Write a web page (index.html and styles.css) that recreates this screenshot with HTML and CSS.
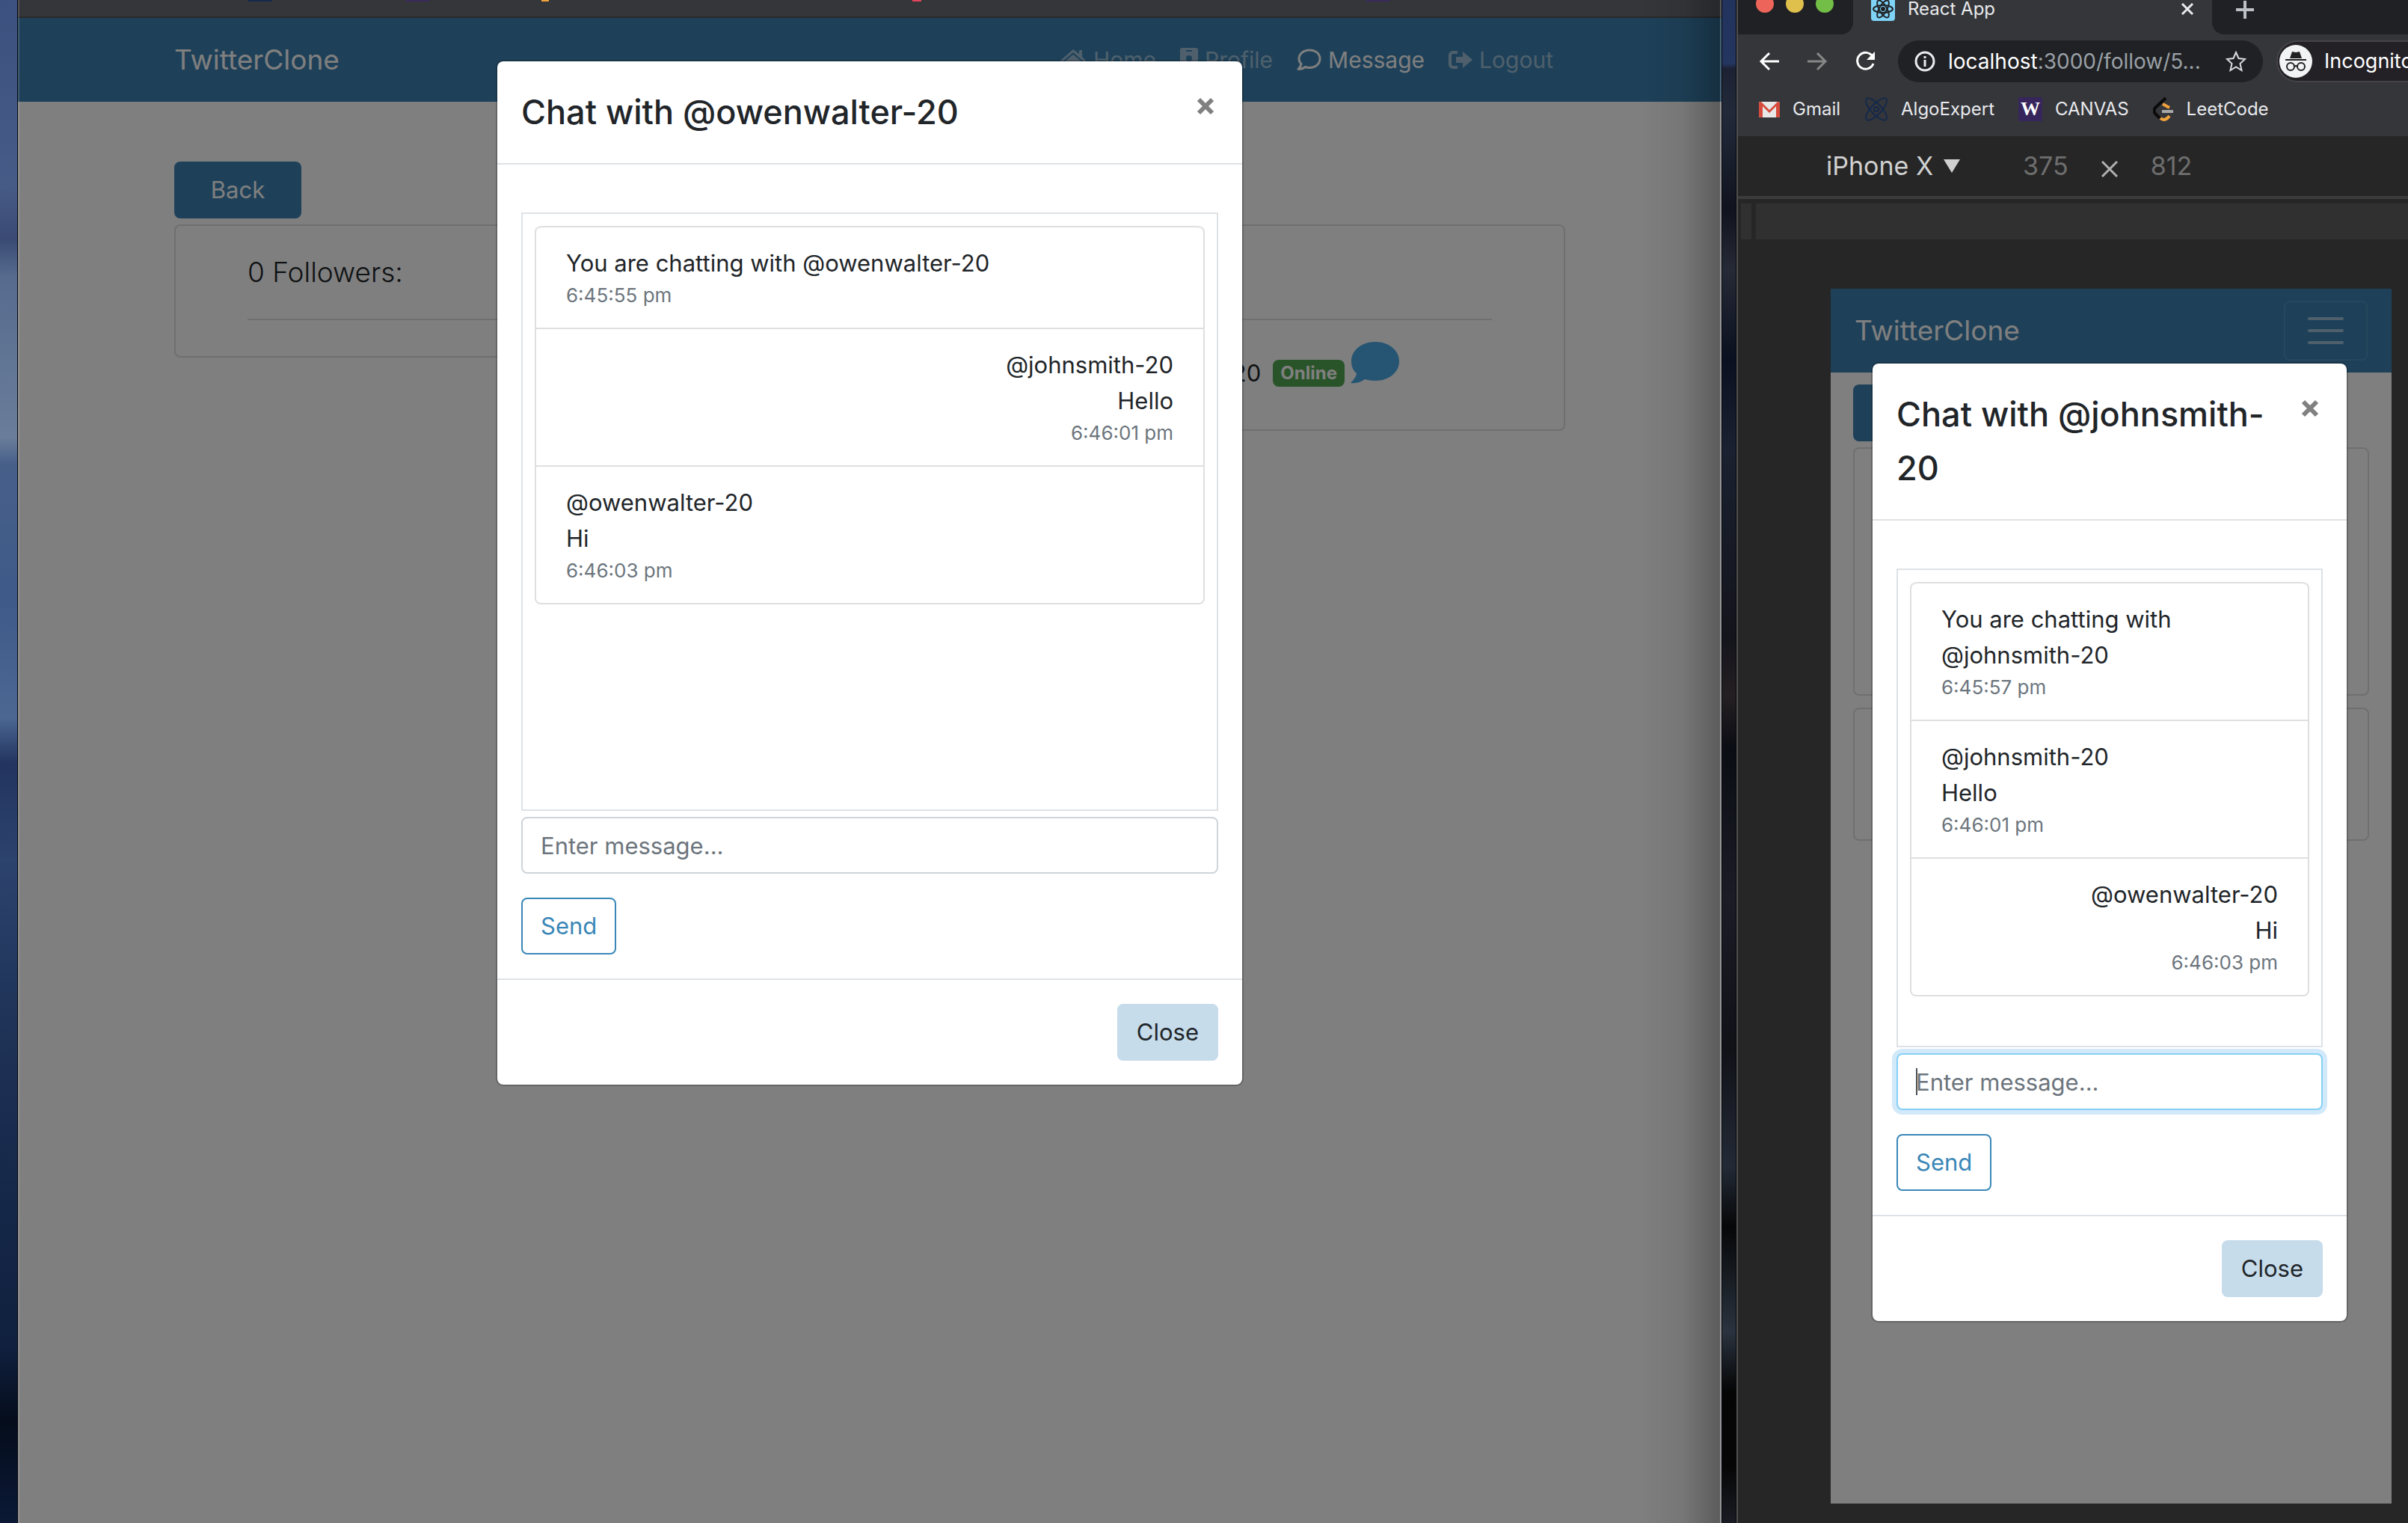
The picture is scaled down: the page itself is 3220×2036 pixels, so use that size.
FILE: index.html
```html
<!DOCTYPE html>
<html lang="en">
<head>
<meta charset="utf-8">
<title>TwitterClone</title>
<link rel="stylesheet" href="styles.css">
</head>
<body>
<div class="desktop">

  <section class="window window-main" aria-label="TwitterClone desktop">
    <div class="tab-edge">
      <span class="peek peek-navy"></span>
      <span class="peek peek-purple"></span>
      <span class="peek peek-orange"></span>
      <span class="peek peek-red"></span>
      <span class="peek peek-purple"></span>
    </div>
    <div class="page">
      <nav class="navbar">
        <div class="container navbar-row">
          <a class="brand" href="#">TwitterClone</a>
          <div class="nav-links">
            <a class="nav-link" href="#"><svg class="nav-icon" width="36" height="32" viewBox="0 0 36 32"><path d="M18 2 1 17l2 2L18 6l15 13 2-2-5-5V3h-4v5z"/><path d="M18 9 6 19v11h9v-8h6v8h9V19z"/></svg>Home</a>
            <a class="nav-link" href="#"><svg class="nav-icon" width="24" height="32" viewBox="0 0 24 32"><path fill-rule="evenodd" d="M3 0h18a3 3 0 0 1 3 3v26a3 3 0 0 1-3 3H3a3 3 0 0 1-3-3V3a3 3 0 0 1 3-3zm5 3v2h8V3zm4 7a4 4 0 1 0 0 8 4 4 0 0 0 0-8zM5 26h14c0-4-2-6-4-6H9c-2 0-4 2-4 6z"/></svg>Profile</a>
            <a class="nav-link active" href="#"><svg class="nav-icon" width="33" height="32" viewBox="0 0 33 32"><path fill="none" stroke="currentColor" stroke-width="3" stroke-linejoin="round" d="M17 3C9 3 3 8 3 14.500c0 3 1 5 3 7-.5 3-2 5-4 7 4 0 7-1 9.500-3 2 .7 3.500 1 5.500 1 8 0 14-5 14-12S25 3 17 3z"/></svg>Message</a>
            <a class="nav-link" href="#"><svg class="nav-icon" width="32" height="32" viewBox="0 0 32 32"><path d="M12 4H6a6 6 0 0 0-6 6v12a6 6 0 0 0 6 6h6v-4H6a2 2 0 0 1-2-2V10a2 2 0 0 1 2-2h6z"/><path d="M19 5v7h-9v8h9v7l13-11z"/></svg>Logout</a>
          </div>
        </div>
      </nav>
      <main class="container content">
        <button class="btn btn-back" type="button">Back</button>
        <div class="card-row">
          <div class="card">
            <h2 class="card-title">0 Followers:</h2>
            <hr class="rule">
          </div>
          <div class="card">
            <div class="card-title"></div>
            <hr class="rule">
            <div class="follow-row">
              <span>@owenwalter-20</span>
              <span class="badge">Online</span>
              <svg class="bubble" width="65" height="56" viewBox="0 0 65 56"><path d="M33 0C15 0 1 11 1 26c0 6 2 12 7 16 0 4-4 9-8 13 9 1 15-2 19-5 4 1 9 2 14 2 18 0 32-11 32-26S51 0 33 0z"/></svg>
            </div>
          </div>
        </div>
      </main>
      <div class="backdrop">
        <div class="modal" role="dialog" aria-labelledby="title-a">
          <header class="modal-header">
            <h1 class="modal-title" id="title-a">Chat with @owenwalter-20</h1>
            <button class="modal-x" type="button" aria-label="Dismiss"><svg width="24" height="24" viewBox="0 0 24 24"><path d="M3 3 21 21M21 3 3 21"/></svg></button>
          </header>
          <form class="modal-body">
            <div class="chat-box chat-box-tall">
              <ul class="messages">
                <li>You are chatting with @owenwalter-20<small>6:45:55 pm</small></li>
                <li class="mine">@johnsmith-20<br>Hello<small>6:46:01 pm</small></li>
                <li>@owenwalter-20<br>Hi<small>6:46:03 pm</small></li>
              </ul>
            </div>
            <input class="field" type="text" placeholder="Enter message..." aria-label="Message">
            <button class="btn btn-send" type="button">Send</button>
          </form>
          <footer class="modal-footer"><button class="btn btn-close" type="button">Close</button></footer>
        </div>
      </div>
    </div>
  </section>

  <section class="window window-phone" aria-label="React App">
    <div class="tabs">
      <div class="lights"><i class="light red"></i><i class="light yellow"></i><i class="light green"></i></div>
      <div class="tab">
        <svg width="32" height="32" viewBox="0 0 32 32"><rect width="32" height="32" rx="4" fill="#7fd3f7"/><g fill="none" stroke="#202124" stroke-width="2"><ellipse cx="16" cy="16" rx="13" ry="5"/><ellipse cx="16" cy="16" rx="13" ry="5" transform="rotate(60 16 16)"/><ellipse cx="16" cy="16" rx="13" ry="5" transform="rotate(120 16 16)"/></g><circle cx="16" cy="16" r="3" fill="#202124"/></svg>
        <span class="tab-title">React App</span>
        <svg width="18" height="18" viewBox="0 0 18 18"><path d="M2 2 16 16M16 2 2 16" stroke="#e8eaed" stroke-width="3"/></svg>
      </div>
      <div class="new-tab"><svg width="26" height="26" viewBox="0 0 26 26"><path d="M13 1v24M1 13h24" stroke="#bdc1c6" stroke-width="4"/></svg></div>
    </div>
    <div class="toolbar">
      <svg width="28" height="28" viewBox="0 0 28 28"><path d="M27 14H3M14 3 3 14l11 11" fill="none" stroke="#fff" stroke-width="3"/></svg>
      <svg width="28" height="28" viewBox="0 0 28 28"><path d="M1 14h24M14 3l11 11-11 11" fill="none" stroke="#868686" stroke-width="3"/></svg>
      <svg width="28" height="28" viewBox="0 0 28 28"><path d="M24 7.500A11 11 0 1 0 25 17" fill="none" stroke="#fff" stroke-width="3"/><path d="M27 1v11H16z" fill="#fff"/></svg>
      <div class="url">
        <svg width="28" height="28" viewBox="0 0 28 28"><circle cx="14" cy="14" r="12" fill="none" stroke="#e8eaed" stroke-width="3"/><path d="M14 12v9M14 7v3" stroke="#e8eaed" stroke-width="3"/></svg>
        <span class="address"><b>localhost</b>:3000/follow/5...</span>
        <svg width="28" height="28" viewBox="0 0 28 28"><path d="m14 2 3.500 8 8.500 1-6.500 6 2 9-7.500-4.500L6.500 26l2-9L2 11l8.500-1z" fill="none" stroke="#dadce0" stroke-width="2"/></svg>
      </div>
      <div class="incognito">
        <svg width="44" height="44" viewBox="0 0 44 44"><circle cx="22" cy="22" r="22" fill="#f1f3f4"/><path d="M14 18 17 9l5 1 5-1 3 9zM8 19h28v2H8z" fill="#202124"/><g fill="none" stroke="#202124" stroke-width="2"><circle cx="15" cy="29" r="5"/><circle cx="29" cy="29" r="5"/><path d="M20 29q2-2 4 0"/></g></svg>
        <span>Incognito</span>
      </div>
    </div>
    <div class="bookmarks">
      <a href="#"><svg width="28" height="32" viewBox="0 0 28 32"><rect y="6" width="28" height="21" rx="2" fill="#e8e8e8"/><path d="M14 17 25 6h1a2 2 0 0 1 2 2v17a2 2 0 0 1-2 2h-3V12l-9 9-9-9v15H2a2 2 0 0 1-2-2V8a2 2 0 0 1 2-2h1z" fill="#d54b3d"/></svg>Gmail</a>
      <a href="#"><svg width="32" height="32" viewBox="0 0 32 32"><g fill="none" stroke="#14294b" stroke-width="2"><ellipse cx="16" cy="16" rx="19" ry="7" transform="rotate(47 16 16)"/><ellipse cx="16" cy="16" rx="19" ry="7" transform="rotate(133 16 16)"/><circle cx="16" cy="16" r="3"/></g></svg>AlgoExpert</a>
      <a href="#"><span class="w-mark">W</span>CANVAS</a>
      <a href="#"><svg width="28" height="32" viewBox="0 0 28 32"><path d="M17 1 3 14q-3 4 0 8l6 6" fill="none" stroke="#0b0b0b" stroke-width="4"/><path d="m13 9 9 5M10 28q6 5 12-3" fill="none" stroke="#f2a33a" stroke-width="4"/><path d="M12 19h15" stroke="#a8a8a8" stroke-width="4"/></svg>LeetCode</a>
    </div>
    <div class="device-bar">
      <button class="device-name" type="button">iPhone X <svg width="22" height="18" viewBox="0 0 22 18"><path d="M0 0h22L11 18z" fill="#d0d0d0"/></svg></button>
      <span class="dim">375</span>
      <svg class="times" width="22" height="22" viewBox="0 0 22 22"><path d="M1 1 21 21M21 1 1 21" stroke="#b0b0b0" stroke-width="3"/></svg>
      <span class="dim">812</span>
    </div>
    <div class="ruler"></div>
    <div class="stage">
      <div class="page device">
        <nav class="navbar navbar-small">
          <a class="brand" href="#">TwitterClone</a>
          <button class="toggler" type="button" aria-label="Toggle navigation"><svg width="48" height="36" viewBox="0 0 48 36"><path d="M2 2h44M2 18h44M2 34h44" stroke="rgba(255,255,255,.5)" stroke-width="4" stroke-linecap="round"/></svg></button>
        </nav>
        <main class="content-small">
          <button class="btn btn-back" type="button" aria-label="Back"></button>
          <div class="card card-tall"></div>
          <div class="card card-short"></div>
        </main>
        <div class="backdrop backdrop-small">
          <div class="modal" role="dialog" aria-labelledby="title-b">
            <header class="modal-header">
              <h1 class="modal-title" id="title-b">Chat with @johnsmith-20</h1>
              <button class="modal-x" type="button" aria-label="Dismiss"><svg width="24" height="24" viewBox="0 0 24 24"><path d="M3 3 21 21M21 3 3 21"/></svg></button>
            </header>
            <form class="modal-body">
              <div class="chat-box">
                <ul class="messages">
                  <li>You are chatting with @johnsmith-20<small>6:45:57 pm</small></li>
                  <li>@johnsmith-20<br>Hello<small>6:46:01 pm</small></li>
                  <li class="mine">@owenwalter-20<br>Hi<small>6:46:03 pm</small></li>
                </ul>
              </div>
              <div class="field-wrap">
                <input class="field field-focus" type="text" placeholder="Enter message..." aria-label="Message">
                <span class="caret"></span>
              </div>
              <button class="btn btn-send" type="button">Send</button>
            </form>
            <footer class="modal-footer"><button class="btn btn-close" type="button">Close</button></footer>
          </div>
        </div>
      </div>
    </div>
  </section>
</div>
</body>
</html>
```
FILE: styles.css
```css
* { box-sizing: border-box; }

body {
  margin: 0;
  font-family: Inter, "Liberation Sans", sans-serif;
  font-size: 31px;
  line-height: 48px;
  color: #212529;
  background: #0a0e18;
}

a { color: inherit; text-decoration: none; }
button, input { font: inherit; margin: 0; }
h1, h2, ul { margin: 0; padding: 0; }
svg { display: block; flex: none; }

/* Desktop with the wallpaper showing between the windows */
.desktop {
  display: grid;
  grid-template-columns: minmax(0, 2278fr) minmax(0, 898fr);
  gap: 20px;
  padding-left: 24px;
  height: 100vh;
  overflow: hidden;
  background:
    linear-gradient(#3d5180 0, #465b86 250px, #3a4a74 320px, #566b8e 370px, #6a7d9a 585px, #47608a 620px, #3f5a88 800px, #4b6792 960px, #22345f 1020px, #2c436e 1150px, #203459 1350px, #172a4c 1550px, #10203e 1800px, #050d1c 1900px, #0b1936 2036px) 0 0 / 24px 100% no-repeat,
    linear-gradient(#22345e 0, #24355f 85px, #1c2233 92px, #222a3a 150px, #10131e 280px, #262a36 360px, #0b1020 480px, #1a2130 600px, #14141c 850px, #241f22 930px, #0b0d14 1000px, #1b1c26 1200px, #111118 1400px, #232a36 1560px, #060708 1640px, #2a333f 1780px, #050505 1860px, #060606 1960px, #1b1c24 2036px);
}

.window { display: flex; flex-direction: column; min-width: 0; box-shadow: 0 0 0 1px #05070c; }
.window-main { position: relative; background: #35363a; }
.window-main::before,
.window-main::after { content: ""; position: absolute; top: 0; bottom: 0; z-index: 5; pointer-events: none; }
.window-main::before { left: 0; width: 2px; background: rgba(255, 255, 255, .15); }
.window-main::after {
  right: 0;
  width: 110px;
  border-right: 2px solid rgba(255, 255, 255, .18);
  background: linear-gradient(90deg, transparent, rgba(0, 0, 0, .07) 55%, rgba(0, 0, 0, .28));
}
.window-phone { background: #262626; border-left: 2px solid #505050; }

/* Bottom edge of the bookmark bar */
.tab-edge {
  display: grid;
  grid-template-columns: 210px 182px 496px 606px 32px;
  height: 24px;
  padding-left: 308px;
  border-bottom: 2px solid #29292b;
}
.peek { width: 32px; height: 2px; }
.peek-navy { background: #14294b; }
.peek-purple { background: #3a2a5c; }
.peek-orange { width: 10px; background: #f2a33a; }
.peek-red { width: 12px; background: #e0435a; }

/* Web page */
.page { position: relative; flex: 1; background: #fff; min-height: 0; }
.container { width: 82%; max-width: 1860px; margin: 0 auto; }
.navbar { background: #3c82b2; color: #fff; }
.navbar-row { display: flex; align-items: center; justify-content: space-between; height: 112px; padding-right: 16px; }
.brand { font-size: 37px; line-height: 60px; }
.nav-links { display: flex; gap: 32px; font-size: 30px; }
.nav-link { display: flex; align-items: center; gap: 9px; color: rgba(255, 255, 255, .5); }
.nav-link.active { color: #fff; }
.nav-icon { fill: currentColor; }

.content { padding-top: 80px; }
.btn {
  height: 76px;
  padding: 0 24px;
  border: 2px solid transparent;
  border-radius: 8px;
  line-height: 48px;
}
.btn-back { display: block; min-width: 170px; padding: 0 46px; margin-bottom: 8px; background: #3c82b2; color: #fff; }
.btn-send { background: #fff; color: #3a87b7; border-color: #3a87b7; }
.btn-close { background: #c6dceb; color: #212529; }

.card-row { display: grid; grid-template-columns: 1fr 1fr; align-items: start; }
.card { padding: 32px 96px 48px; border: 2px solid rgba(0, 0, 0, .125); border-radius: 8px; }
.card-title { min-height: 60px; font-size: 37px; font-weight: 300; line-height: 60px; }
.rule { margin: 32px 0 0; border: 0; border-top: 2px solid rgba(0, 0, 0, .12); }
.follow-row { display: flex; align-items: center; justify-content: flex-end; gap: 8px; height: 98px; padding: 44px 124px 0 0; white-space: nowrap; }
.badge { margin-left: 8px; padding: 0 10px; border-radius: 8px; font-size: 24px; font-weight: 700; line-height: 36px; background: #52a852; color: #fff; }
.bubble { fill: #4aaae4; margin-bottom: 28px; }

/* Modal */
.backdrop {
  position: absolute;
  inset: 0;
  display: flex;
  align-items: flex-start;
  justify-content: center;
  padding-top: 56px;
  background: rgba(0, 0, 0, .5);
}
.backdrop-small { padding: 98px 58px 0 54px; }
.modal {
  width: 100%;
  max-width: 1000px;
  background: #fff;
  background-clip: padding-box;
  border: 2px solid rgba(0, 0, 0, .2);
  border-radius: 10px;
}
.modal-header {
  display: flex;
  align-items: flex-start;
  justify-content: space-between;
  padding: 32px;
  border-bottom: 2px solid #dee2e6;
}
.modal-title { font-size: 45px; font-weight: 500; line-height: 72px; }
.modal-x { padding: 16px 5px; border: 0; background: none; }
.modal-x path { stroke: #808080; stroke-width: 6; }
.modal-body { padding: 64px 32px 32px; }
.chat-box { min-height: 640px; padding: 16px; border: 2px solid #dee2e6; margin-bottom: 8px; }
.chat-box-tall { min-height: 800px; }
.messages { list-style: none; border: 2px solid #dfdfdf; border-top: 0; border-radius: 8px; }
.messages li { padding: 24px 40px; border-top: 2px solid #dfdfdf; }
.messages li:first-child { border-radius: 8px 8px 0 0; }
.messages .mine { text-align: right; }
.messages small { display: block; font-size: 26px; line-height: 38px; color: #6c757d; }
.field {
  display: block;
  width: 100%;
  height: 76px;
  padding: 0 24px;
  margin-bottom: 32px;
  border: 2px solid #ced4da;
  border-radius: 8px;
  background: #fff;
}
.field::placeholder { color: #6c757d; opacity: 1; }
.field-wrap { position: relative; }
.field-focus { border-color: #85d0f7; box-shadow: 0 0 0 6px #d2e9fa; }
.caret { position: absolute; left: 26px; top: 20px; width: 2px; height: 36px; background: #495057; }
.modal-footer { display: flex; justify-content: flex-end; padding: 32px; border-top: 2px solid #dee2e6; }

/* Browser chrome of the second window */
.tabs { display: flex; height: 46px; background: #35363a; color: #e8eaed; font-size: 24px; line-height: 32px; }
.lights { display: flex; gap: 16px; width: 154px; padding-left: 24px; background: #202124; border-bottom-right-radius: 16px; }
.light { width: 24px; height: 24px; margin-top: -7px; border-radius: 50%; }
.red { background: #ed655a; }
.yellow { background: #e0c04c; }
.green { background: #72be47; }
.tab { display: flex; align-items: center; width: 480px; height: 32px; margin-top: -4px; padding: 0 24px; gap: 17px; }
.tab-title { flex: 1; }
.new-tab { flex: 1; padding-left: 31px; background: #202124; border-bottom-left-radius: 16px; }
.toolbar { display: flex; align-items: center; gap: 36px; height: 72px; padding-left: 28px; background: #35363a; }
.url { display: flex; align-items: center; gap: 17px; flex: none; width: 488px; height: 56px; margin-left: -6px; padding: 0 22px; border-radius: 28px; background: #202124; font-size: 28px; color: #9aa0a6; }
.address { flex: 1; white-space: nowrap; }
.address b { font-weight: 400; color: #fff; }
.incognito { display: flex; align-items: center; gap: 16px; flex: 1; height: 56px; margin-left: -18px; padding-left: 2px; border: 2px solid #45444a; border-right: 0; border-radius: 28px 0 0 28px; background: #232125; color: #fff; font-size: 27px; min-width: 0; overflow: hidden; }
.bookmarks { display: flex; gap: 32px; height: 64px; padding-left: 28px; background: #35363a; color: #e8eaed; font-size: 24px; line-height: 56px; }
.bookmarks a { display: flex; align-items: center; gap: 17px; height: 56px; }
.w-mark { width: 32px; height: 32px; background: #37265b; color: #fff; font: bold 26px/32px "Liberation Serif", serif; text-align: center; }
.device-bar { display: flex; align-items: center; gap: 44px; height: 84px; padding-left: 118px; border-bottom: 4px solid #3c3c3c; font-size: 34px; }
.device-name { display: flex; align-items: center; gap: 14px; margin-right: 40px; padding: 0; border: 0; background: none; color: #d0d0d0; }
.dim { color: #6e6e6e; }
.times { margin-top: 8px; }
.ruler { height: 48px; margin: 6px 0 0 4px; border-left: 14px solid #303030; background: linear-gradient(90deg, #262626 6px, #303030 6px); }
.stage { display: flex; flex: 1; padding: 66px 22px 26px 124px; }
.device { overflow: hidden; }
.navbar-small { display: flex; align-items: center; justify-content: space-between; height: 112px; padding: 0 32px; }
.toggler { display: flex; align-items: center; justify-content: center; width: 112px; height: 80px; padding: 0; border: 2px solid rgba(255, 255, 255, .1); border-radius: 8px; background: none; }
.content-small { padding: 16px 30px; }
.card-tall { height: 332px; margin-bottom: 16px; }
.card-short { height: 178px; }
```
